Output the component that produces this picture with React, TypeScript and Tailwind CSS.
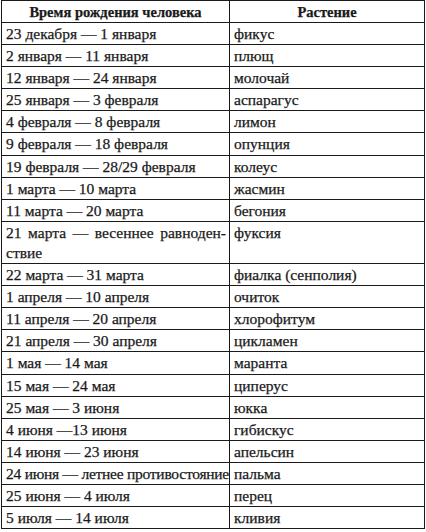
import React from 'react';

interface Row {
  period: string;
  plant: string;
}

const rows: Row[] = [
  { period: '23 декабря — 1 января', plant: 'фикус' },
  { period: '2 января — 11 января', plant: 'плющ' },
  { period: '12 января — 24 января', plant: 'молочай' },
  { period: '25 января — 3 февраля', plant: 'аспарагус' },
  { period: '4 февраля — 8 февраля', plant: 'лимон' },
  { period: '9 февраля — 18 февраля', plant: 'опунция' },
  { period: '19 февраля — 28/29 февраля', plant: 'колеус' },
  { period: '1 марта — 10 марта', plant: 'жасмин' },
  { period: '11 марта — 20 марта', plant: 'бегония' },
  { period: 'SPLIT', plant: 'фуксия' },
  { period: '22 марта — 31 марта', plant: 'фиалка (сенполия)' },
  { period: '1 апреля — 10 апреля', plant: 'очиток' },
  { period: '11 апреля — 20 апреля', plant: 'хлорофитум' },
  { period: '21 апреля — 30 апреля', plant: 'цикламен' },
  { period: '1 мая — 14 мая', plant: 'маранта' },
  { period: '15 мая — 24 мая', plant: 'циперус' },
  { period: '25 мая — 3 июня', plant: 'юкка' },
  { period: '4 июня —13 июня', plant: 'гибискус' },
  { period: '14 июня — 23 июня', plant: 'апельсин' },
  { period: '24 июня — летнее противостояние', plant: 'пальма' },
  { period: '25 июня — 4 июля', plant: 'перец' },
  { period: '5 июля — 14 июля', plant: 'кливия' },
];

const App: React.FC = () => {
  return (
    <div className="bg-white w-[426px] h-[532px] pl-[1px] text-[#1a1a1a] font-['Liberation_Serif'] [-webkit-text-stroke:0.25px_#1a1a1a]">
      <div className="w-[424px] border-l border-r border-t border-[#1a1a1a]">
        <div className="flex h-[22px] border-b border-[#1a1a1a] font-bold text-[14.5px] leading-[20px]">
          <div className="w-[228px] border-r border-[#1a1a1a] text-center pt-[1px]">Время рождения человека</div>
          <div className="flex-1 text-center pt-[1px]">Растение</div>
        </div>
        {rows.map((r, i) =>
          r.period === 'SPLIT' ? (
            <div key={i} className="flex h-[42.2px] border-b border-[#1a1a1a] text-[15.5px] leading-[20px]">
              <div className="w-[228px] border-r border-[#1a1a1a] pl-[4px] pr-[3px] pt-[1px]">
                <div className="whitespace-nowrap flex justify-between">
                  <span>21</span>
                  <span>марта</span>
                  <span>—</span>
                  <span>весеннее</span>
                  <span>равноден-</span>
                </div>
                <div>ствие</div>
              </div>
              <div className="flex-1 pl-[4px] pt-[1px]">{r.plant}</div>
            </div>
          ) : (
            <div key={i} className="flex h-[22.1px] border-b border-[#1a1a1a] text-[15.5px] leading-[20px]">
              <div
                className={
                  r.period.startsWith('24 июня')
                    ? 'w-[228px] border-r border-[#1a1a1a] pl-[4px] pt-[1px] whitespace-nowrap tracking-[-0.25px]'
                    : 'w-[228px] border-r border-[#1a1a1a] pl-[4px] pt-[1px] whitespace-nowrap'
                }
              >
                {r.period}
              </div>
              <div className="flex-1 pl-[4px] pt-[1px] whitespace-nowrap">{r.plant}</div>
            </div>
          )
        )}
      </div>
    </div>
  );
};

export default App;
